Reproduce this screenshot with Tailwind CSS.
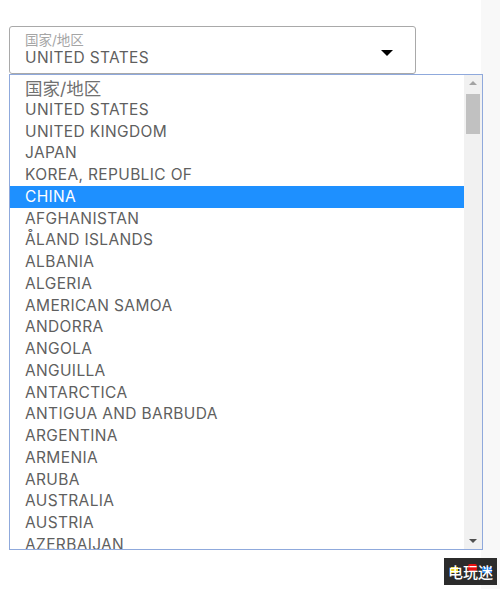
<!DOCTYPE html>
<html lang="zh">
<head>
<meta charset="UTF-8" />
<title>国家/地区</title>
<script src="https://cdn.jsdelivr.net/npm/@tailwindcss/browser@4"></script>
</head>
<body class="bg-white h-[589px] overflow-hidden relative font-['Inter','Noto_Sans_CJK_SC',sans-serif] text-[#5f5f5f]">
  <div class="absolute top-0 bottom-0 left-[481px] right-0 bg-[#f8f8f8]"></div>

  <div class="relative pt-[26px] pl-[9px]">
    <div class="w-[407px] h-[48px] border border-[#a9a9a9] rounded-[3px] bg-white pl-[15px] pr-[22px] flex items-center justify-between">
      <div class="mt-[-2px]">
        <div class="text-[13.5px] leading-[17px] text-[#a5a5a5]">国家/地区</div>
        <div class="text-[15.5px] leading-[18px] tracking-[0.35px] text-[#5f5f5f]">UNITED STATES</div>
      </div>
      <div class="w-0 h-0 border-x-[6px] border-x-transparent border-t-[6px] border-t-black mt-[6px]"></div>
    </div>

    <div class="w-[474px] h-[476px] border border-[#8fa9dc] bg-white flex overflow-hidden">
      <ul class="flex-1 min-w-0 text-[15.5px] leading-[21.75px] tracking-[0.35px] pt-[2px]">
        <li class="pl-[15px] h-[21.75px] text-[17.5px] tracking-normal text-[#707070] pt-[1px]">国家/地区</li>
        <li class="pl-[15px] h-[21.75px]">UNITED STATES</li>
        <li class="pl-[15px] h-[21.75px]">UNITED KINGDOM</li>
        <li class="pl-[15px] h-[21.75px]">JAPAN</li>
        <li class="pl-[15px] h-[21.75px]">KOREA, REPUBLIC OF</li>
        <li class="pl-[15px] h-[21.75px] bg-[#1e90ff] text-white">CHINA</li>
        <li class="pl-[15px] h-[21.75px]">AFGHANISTAN</li>
        <li class="pl-[15px] h-[21.75px]">ÅLAND ISLANDS</li>
        <li class="pl-[15px] h-[21.75px]">ALBANIA</li>
        <li class="pl-[15px] h-[21.75px]">ALGERIA</li>
        <li class="pl-[15px] h-[21.75px]">AMERICAN SAMOA</li>
        <li class="pl-[15px] h-[21.75px]">ANDORRA</li>
        <li class="pl-[15px] h-[21.75px]">ANGOLA</li>
        <li class="pl-[15px] h-[21.75px]">ANGUILLA</li>
        <li class="pl-[15px] h-[21.75px]">ANTARCTICA</li>
        <li class="pl-[15px] h-[21.75px]">ANTIGUA AND BARBUDA</li>
        <li class="pl-[15px] h-[21.75px]">ARGENTINA</li>
        <li class="pl-[15px] h-[21.75px]">ARMENIA</li>
        <li class="pl-[15px] h-[21.75px]">ARUBA</li>
        <li class="pl-[15px] h-[21.75px]">AUSTRALIA</li>
        <li class="pl-[15px] h-[21.75px]">AUSTRIA</li>
        <li class="pl-[15px] h-[21.75px]">AZERBAIJAN</li>
      </ul>
      <div class="w-[18px] shrink-0 bg-[#f1f1f1] flex flex-col items-center justify-between py-[6px] relative">
        <div class="w-0 h-0 border-x-[4px] border-x-transparent border-b-[4px] border-b-[#a3a3a3]"></div>
        <div class="absolute top-[19px] left-[2px] w-[14px] h-[40px] bg-[#c1c1c1]"></div>
        <div class="w-0 h-0 border-x-[4px] border-x-transparent border-t-[4px] border-t-[#505050]"></div>
      </div>
    </div>
  </div>

  <!-- watermark logo -->
  <div class="absolute left-[444px] top-[558px] w-[53px] h-[27px] bg-[#2b2b2b] flex items-center justify-center text-[15px] leading-[15px] font-medium text-white font-['Noto_Sans_CJK_SC',sans-serif]">
    <span class="relative block w-[15px] h-[15px]">
      <span class="absolute left-[3px] top-[3px] w-[7px] h-[6px] bg-[#f0d818]"></span>
      <span class="relative block">电</span>
    </span>
    <span class="relative block w-[15px] h-[15px]">
      <span class="absolute left-[5px] top-[0px] w-[9px] h-[7px] rounded-[2px] bg-[#e81010]"></span>
      <span class="relative block">玩</span>
    </span>
    <span class="relative block w-[15px] h-[15px]">
      <span class="absolute left-[4px] top-[3px] w-[10px] h-[6px] bg-[#1878e8]"></span>
      <span class="relative block">迷</span>
    </span>
  </div>
</body>
</html>
